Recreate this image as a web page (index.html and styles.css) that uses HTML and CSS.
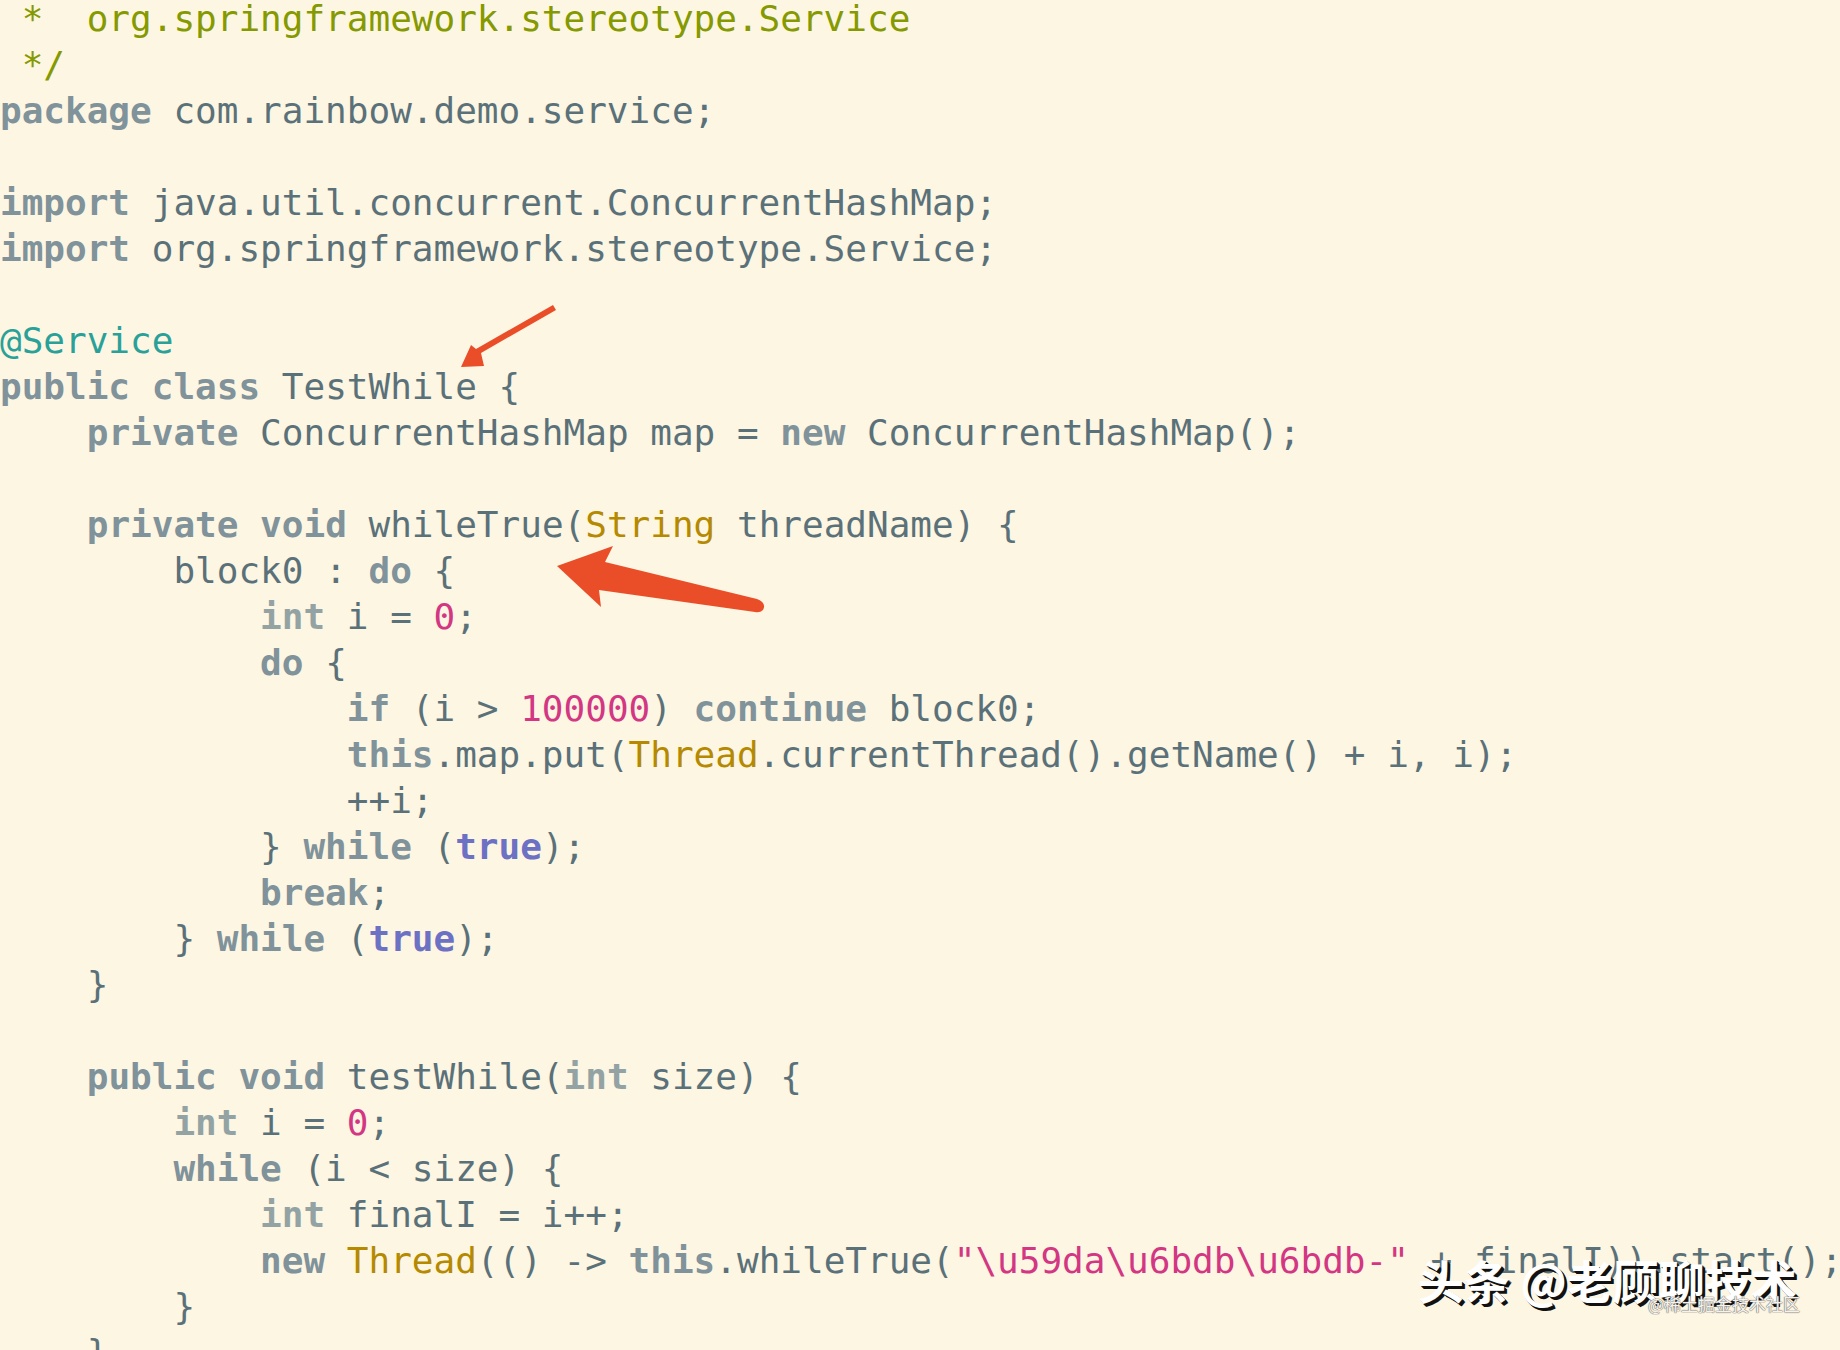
FILE: index.html
```html
<!DOCTYPE html>
<html lang="zh">
<head>
<meta charset="utf-8">
<title>TestWhile.java</title>
<link rel="stylesheet" href="styles.css">
</head>
<body>
<main class="page">
<div class="code">
<div class="ln"><span class="c"> *  org.springframework.stereotype.Service</span></div>
<div class="ln"><span class="c"> */</span></div>
<div class="ln"><span class="k">package</span> com.rainbow.demo.service;</div>
<div class="ln"></div>
<div class="ln"><span class="k">import</span> java.util.concurrent.ConcurrentHashMap;</div>
<div class="ln"><span class="k">import</span> org.springframework.stereotype.Service;</div>
<div class="ln"></div>
<div class="ln"><span class="a">@Service</span></div>
<div class="ln"><span class="k">public</span> <span class="k">class</span> TestWhile {</div>
<div class="ln">    <span class="k">private</span> ConcurrentHashMap map = <span class="k">new</span> ConcurrentHashMap();</div>
<div class="ln"></div>
<div class="ln">    <span class="k">private</span> <span class="k">void</span> whileTrue(<span class="t">String</span> threadName) {</div>
<div class="ln">        block0 : <span class="k">do</span> {</div>
<div class="ln">            <span class="p">int</span> i = <span class="n">0</span>;</div>
<div class="ln">            <span class="k">do</span> {</div>
<div class="ln">                <span class="k">if</span> (i &gt; <span class="n">100000</span>) <span class="k">continue</span> block0;</div>
<div class="ln">                <span class="k">this</span>.map.put(<span class="t">Thread</span>.currentThread().getName() + i, i);</div>
<div class="ln">                ++i;</div>
<div class="ln">            } <span class="k">while</span> (<span class="b">true</span>);</div>
<div class="ln">            <span class="k">break</span>;</div>
<div class="ln">        } <span class="k">while</span> (<span class="b">true</span>);</div>
<div class="ln">    }</div>
<div class="ln"></div>
<div class="ln">    <span class="k">public</span> <span class="k">void</span> testWhile(<span class="p">int</span> size) {</div>
<div class="ln">        <span class="p">int</span> i = <span class="n">0</span>;</div>
<div class="ln">        <span class="k">while</span> (i &lt; size) {</div>
<div class="ln">            <span class="p">int</span> finalI = i++;</div>
<div class="ln">            <span class="k">new</span> <span class="t">Thread</span>(() -&gt; <span class="k">this</span>.whileTrue(<span class="s">"\u59da\u6bdb\u6bdb-"</span> + finalI)).start();</div>
<div class="ln">        }</div>
<div class="ln">    }</div>
</div>

<svg class="arrows" width="1840" height="1350" viewBox="0 0 1840 1350" aria-hidden="true">
  <path d="M553 305 L556 310 L481 353 L484 366 L461 367 L471 345 L476 349 Z" fill="#ea4e29"/>
  <path d="M557 566 L613 546 L605 562 L757 599 Q767 603 763 610 Q760 613 755 612 L599 590 L601 607 Z" fill="#ea4e29"/>
</svg>

<div class="mark">
  <span class="mark-main">头条 @老顾聊技术</span>
  <span class="mark-sub">@稀土掘金技术社区</span>
</div>
</main>
</body>
</html>
```

FILE: styles.css
```css
html, body {
  margin: 0;
  padding: 0;
}

body {
  background: #fdf6e3;
  width: 1840px;
  height: 1350px;
  overflow: hidden;
}

.page {
  position: relative;
  width: 1840px;
  height: 1350px;
  overflow: hidden;
}

.code {
  margin-top: -4.5px;
  font-family: "DejaVu Sans Mono", "Liberation Mono", monospace;
  font-size: 36px;
  line-height: 46px;
  color: #5b7179;
}

.ln {
  height: 46px;
  white-space: pre;
  overflow: visible;
}

.c { color: #859900; }
.k { color: #80929a; font-weight: bold; }
.p { color: #93a3a3; font-weight: bold; }
.a { color: #2aa198; }
.t { color: #b58900; }
.n { color: #d33682; }
.s { color: #d33682; }
.b { color: #6c71c4; font-weight: bold; }

.arrows {
  position: absolute;
  left: 0;
  top: 0;
  pointer-events: none;
}

.mark {
  position: absolute;
  left: 1418px;
  top: 1254px;
  width: 400px;
  height: 70px;
}

.mark-main {
  position: absolute;
  left: 0;
  top: 0;
  font-family: "Noto Sans CJK SC", sans-serif;
  font-size: 46px;
  line-height: 50px;
  font-weight: 700;
  color: #ffffff;
  white-space: nowrap;
  text-shadow: 2px 2px 0 #111, 3px 3px 0 #111, 1px 1px 0 #333;
}

.mark-sub {
  position: absolute;
  left: 230px;
  top: 38px;
  font-family: "Noto Sans CJK SC", sans-serif;
  font-size: 17px;
  line-height: 24px;
  color: #f7f3ea;
  white-space: nowrap;
  text-shadow: 0 0 1px #777, 0 0 1px #777, 0 0 1px #777;
}
```
